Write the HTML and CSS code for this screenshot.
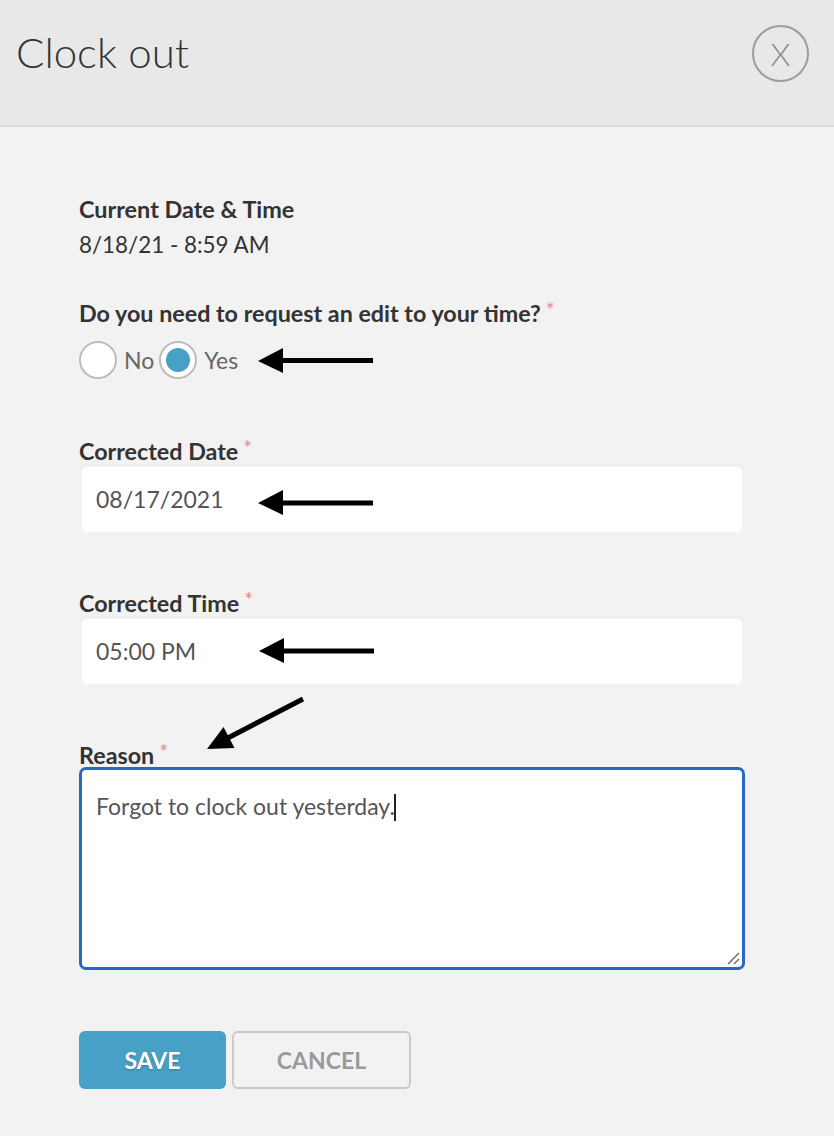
FILE: index.html
```html
<!DOCTYPE html>
<html>
<head>
<meta charset="utf-8">
<link rel="stylesheet" href="styles.css">
</head>
<body>
<div class="page">
  <header class="header">
    <h1 class="title">Clock out</h1>
    <button class="close" type="button">X</button>
  </header>
  <main class="content">
    <div class="info">
      <div class="info-label">Current Date &amp; Time</div>
      <div class="info-value">8/18/21 - 8:59 AM</div>
    </div>

    <div class="question">
      <div class="field-label">Do you need to request an edit to your time?<span class="req">*</span></div>
      <div class="radios">
        <span class="radio"></span><span class="radio-text">No</span>
        <span class="radio checked"><span class="dot"></span></span><span class="radio-text">Yes</span>
      </div>
    </div>

    <div class="field field-date">
      <div class="field-label">Corrected Date<span class="req">*</span></div>
      <div class="input">08/17/2021</div>
    </div>

    <div class="field field-time">
      <div class="field-label">Corrected Time<span class="req">*</span></div>
      <div class="input">05:00 PM</div>
    </div>

    <div class="field reason">
      <div class="field-label">Reason<span class="req">*</span></div>
      <div class="textarea">Forgot to clock out yesterday.<span class="caret"></span>
        <svg class="grip" width="14" height="14" viewBox="0 0 14 14"><path d="M2 13 L13 2 M8 13 L13 8" stroke="#666" stroke-width="1.4" fill="none"/></svg>
      </div>
    </div>

    <div class="actions">
      <button class="btn btn-save" type="button">SAVE</button>
      <button class="btn btn-cancel" type="button">CANCEL</button>
    </div>
  </main>

  <svg class="annotations" width="834" height="1136" viewBox="0 0 834 1136">
    <g fill="#000" stroke="#000">
      <line x1="373" y1="360.5" x2="278" y2="360.5" stroke-width="5"/>
      <polygon points="258,361 283,348 283,373" stroke="none"/>
      <line x1="373" y1="503" x2="278" y2="503" stroke-width="5"/>
      <polygon points="258,503 283,490 283,515" stroke="none"/>
      <line x1="374" y1="651" x2="279" y2="651" stroke-width="5"/>
      <polygon points="259,651 284,638 284,663" stroke="none"/>
      <line x1="303" y1="699" x2="224" y2="740" stroke-width="5"/>
      <polygon points="207,749 223.5,727 234.5,748" stroke="none"/>
    </g>
  </svg>
</div>
</body>
</html>
```

FILE: styles.css
```css
* { box-sizing: border-box; }
html, body { margin: 0; padding: 0; }
body {
  background: #f2f2f2;
  font-family: Lato, "Open Sans", sans-serif;
  color: #333;
}
.page {
  position: relative;
  width: 834px;
  min-height: 1136px;
}
.header {
  height: 127px;
  background: #e8e8e8;
  border-bottom: 2px solid #d9d9d9;
  display: flex;
  align-items: flex-start;
  justify-content: space-between;
  padding: 0 25px 0 16px;
}
.title {
  margin: 0;
  margin-top: 26px;
  font-weight: 300;
  font-size: 42px;
  line-height: 52px;
  color: #333;
}
.close {
  margin-top: 25px;
  width: 57px;
  height: 57px;
  border-radius: 50%;
  border: 2px solid #9c9c9c;
  background: transparent;
  font-family: Lato, sans-serif;
  font-weight: 300;
  font-size: 32px;
  color: #8a8a8a;
  padding: 0;
  display: flex;
  align-items: center;
  justify-content: center;
  line-height: 1;
}
.content {
  padding: 68px 0 0 79px;
}
.info-label {
  font-weight: 700;
  font-size: 23.4px;
  line-height: 28px;
}
.info-value {
  margin-top: 8px;
  font-size: 22.4px;
  line-height: 28px;
  color: #333;
}
.question { margin-top: 40px; }
.field-label {
  font-weight: 700;
  font-size: 23.3px;
  line-height: 28px;
  color: #333;
}
.req {
  color: #f08a8a;
  font-weight: 400;
  font-size: 21px;
  vertical-align: top;
  margin-left: 5px;
  line-height: 22px;
}
.radios {
  margin-top: 14px;
  height: 38px;
  display: flex;
  align-items: center;
}
.radio {
  width: 38px;
  height: 38px;
  border-radius: 50%;
  border: 2px solid #bdbdbd;
  background: #fff;
  display: flex;
  align-items: center;
  justify-content: center;
}
.dot {
  width: 24px;
  height: 24px;
  border-radius: 50%;
  background: #47a1c6;
}
.radio-text {
  font-size: 23px;
  color: #666;
  margin: 0 5px 0 7px;
}
.field { width: 664px; }
.field-date { margin-top: 58px; }
.field-time { margin-top: 57px; }
.input {
  margin-left: 2px;
  width: 662px;
  height: 67px;
  background: #fff;
  border-radius: 5px;
  box-shadow: inset 0 1px 2px rgba(0,0,0,0.12), 0 0 1px rgba(0,0,0,0.05);
  padding-left: 15px;
  display: flex;
  align-items: center;
  font-size: 23px;
  color: #555;
}
.reason { margin-top: 57px; width: 666px; }
.textarea {
  position: relative;
  margin-top: -2px;
  width: 666px;
  height: 203px;
  background: #fff;
  border: 3px solid #2a66c6;
  border-radius: 7px;
  padding: 21px 0 0 14px;
  font-size: 23px;
  line-height: 30px;
  color: #555;
}
.caret {
  display: inline-block;
  width: 2px;
  height: 27px;
  background: #222;
  vertical-align: -6px;
  margin-left: -1px;
}
.grip {
  position: absolute;
  right: 2px;
  bottom: 2px;
}
.actions {
  margin-top: 61px;
  display: flex;
  gap: 6px;
}
.btn {
  height: 58px;
  border-radius: 6px;
  font-family: Lato, sans-serif;
  font-weight: 700;
  font-size: 23px;
  padding: 0;
}
.btn-save {
  width: 147px;
  background: #47a1c6;
  border: none;
  color: #fff;
  text-shadow: 0 1px 2px rgba(0,0,0,0.25);
}
.btn-cancel {
  width: 179px;
  background: #f2f2f2;
  border: 2px solid #cacaca;
  color: #9a9a9a;
}
.annotations {
  position: absolute;
  left: 0;
  top: 0;
  pointer-events: none;
}
```
